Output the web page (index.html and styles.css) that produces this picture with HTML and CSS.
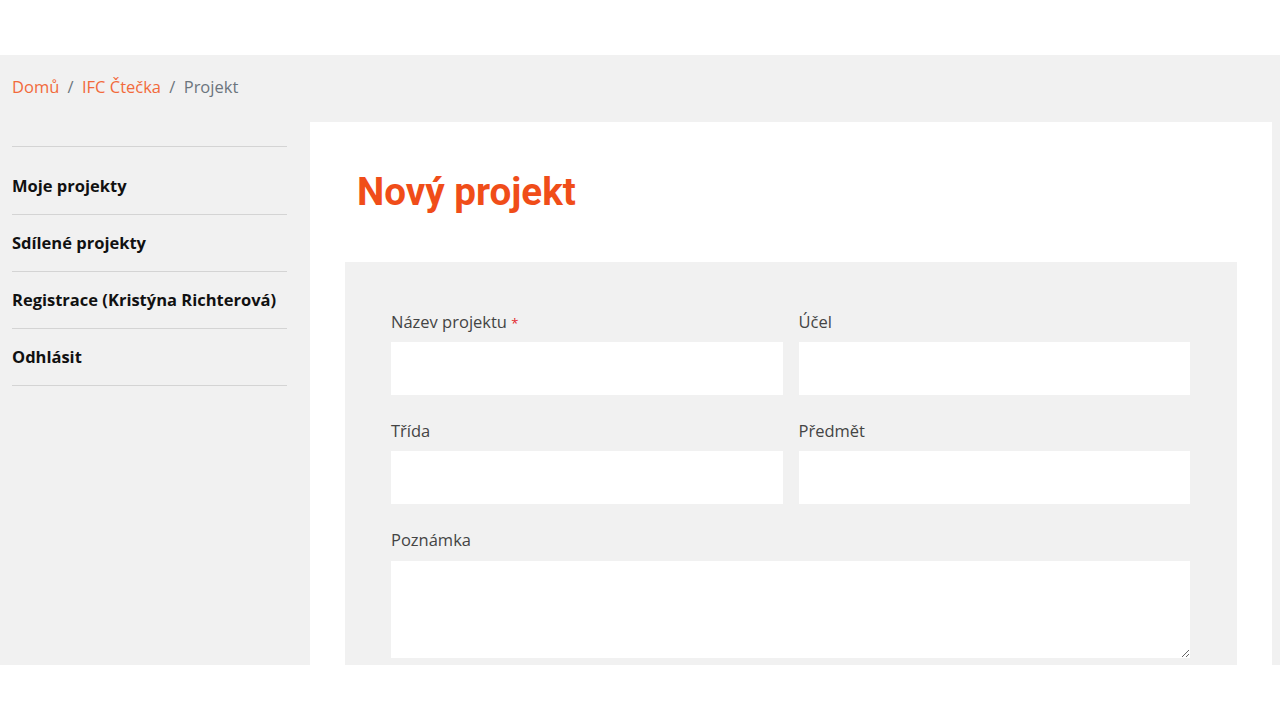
FILE: index.html
```html
<!DOCTYPE html>
<html lang="cs">
<head>
    <meta charset="UTF-8">
    <meta name="viewport" content="width=device-width, initial-scale=1.0">
    <title>Nový projekt</title>
    <link rel="stylesheet" href="styles.css">
</head>
<body>
    <div class="top-bar"></div>
    <div class="page">
        <nav class="breadcrumb">
            <a href="#">Domů</a>
            <span class="sep">/</span>
            <a href="#">IFC Čtečka</a>
            <span class="sep">/</span>
            <span class="current">Projekt</span>
        </nav>
        <div class="layout">
            <aside class="sidebar">
                <ul class="menu">
                    <li><a href="#">Moje projekty</a></li>
                    <li><a href="#">Sdílené projekty</a></li>
                    <li><a href="#">Registrace (Kristýna Richterová)</a></li>
                    <li><a href="#">Odhlásit</a></li>
                </ul>
            </aside>
            <main class="card">
                <h1>Nový projekt</h1>
                <form class="project-form">
                    <div class="field">
                        <label for="name">Název projektu <span class="req">*</span></label>
                        <input type="text" id="name">
                    </div>
                    <div class="field">
                        <label for="purpose">Účel</label>
                        <input type="text" id="purpose">
                    </div>
                    <div class="field">
                        <label for="class">Třída</label>
                        <input type="text" id="class">
                    </div>
                    <div class="field">
                        <label for="subject">Předmět</label>
                        <input type="text" id="subject">
                    </div>
                    <div class="field wide">
                        <label for="note">Poznámka</label>
                        <textarea id="note"></textarea>
                    </div>
                </form>
            </main>
        </div>
    </div>
</body>
</html>
```

FILE: styles.css
```css
body {
    margin: 0;
    background: #fff;
    font-family: "Open Sans", Arial, sans-serif;
    font-size: 16.5px;
    line-height: 24px;
    color: #222;
}

.top-bar {
    height: 55px;
}

.page {
    height: 610px;
    overflow: hidden;
    background: #f1f1f1;
    box-sizing: border-box;
    padding-top: 20px;
}

.breadcrumb {
    padding-left: 12px;
    height: 24px;
    color: #6c757d;
}

.breadcrumb a {
    color: #f26a3b;
    text-decoration: none;
}

.breadcrumb .sep {
    padding: 0 4px;
}

.layout {
    display: flex;
    margin-top: 23px;
}

.sidebar {
    width: 275px;
    margin-left: 12px;
    margin-right: 23px;
    padding-top: 24px;
}

.menu {
    list-style: none;
    margin: 0;
    padding: 0;
    border-top: 1px solid #d4d4d4;
}

.menu li {
    padding: 16px 0;
    border-bottom: 1px solid #d4d4d4;
}

.menu li:first-child {
    padding-top: 27px;
}

.menu a {
    color: #111;
    font-weight: 700;
    text-decoration: none;
}

.card {
    flex: 1;
    background: #fff;
    margin-right: 8px;
    padding: 48px 35px 0;
}

h1 {
    margin: 0 0 48px 12px;
    font-family: Roboto, Arial, sans-serif;
    font-weight: 700;
    font-size: 38.6px;
    line-height: 44px;
    color: #f04d19;
}

.project-form {
    background: #f1f1f1;
    padding: 48px 47px 40px 46px;
    display: grid;
    grid-template-columns: 1fr 1fr;
    column-gap: 16px;
    row-gap: 24px;
}

.field {
    display: flex;
    flex-direction: column;
}

.field.wide {
    grid-column: 1 / 3;
}

label {
    color: #444;
    margin-bottom: 8px;
}

.req {
    color: #e3262a;
    font-size: 13px;
    line-height: 0;
}

input, textarea {
    border: none;
    background: #fff;
    font: inherit;
    padding: 0 12px;
    box-sizing: border-box;
    outline: none;
}

input {
    height: 53px;
}

textarea {
    height: 97px;
    margin-top: 1px;
}
```
